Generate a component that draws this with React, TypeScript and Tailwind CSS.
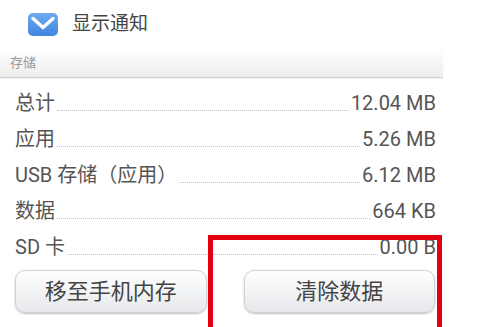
import React from 'react';

const rows = [
  { label: '总计', value: '12.04 MB' },
  { label: '应用', value: '5.26 MB' },
  { label: 'USB 存储（应用）', value: '6.12 MB' },
  { label: '数据', value: '664 KB' },
  { label: 'SD 卡', value: '0.00 B' },
];

const font = { fontFamily: 'Roboto, "Noto Sans CJK SC", sans-serif' };

function CheckIcon() {
  return (
    <svg width="30" height="23" viewBox="0 0 30 23">
      <defs>
        <linearGradient id="cb" x1="0" y1="0" x2="0" y2="1">
          <stop offset="0" stopColor="#6eaaf0" />
          <stop offset="1" stopColor="#3f86e0" />
        </linearGradient>
      </defs>
      <rect x="0" y="0" width="30" height="23" rx="5" fill="url(#cb)" />
      <path d="M5 5.5 L15 14.5 L25 5.5" fill="none" stroke="#fff" strokeWidth="3.4" strokeLinecap="round" strokeLinejoin="round" />
    </svg>
  );
}

function Row({ label, value }: { label: string; value: string }) {
  return (
    <div className="flex h-[36px] items-end pb-[6px] pl-[15px] pr-[7px] text-[20px] leading-none text-[#555]">
      <span className="whitespace-pre">{label}</span>
      <span className="mx-[2px] mb-[2px] flex-1 border-b border-dotted border-[#c4c4c4]" />
      <span>{value}</span>
    </div>
  );
}

export default function App() {
  return (
    <div className="relative h-[327px] w-[500px] overflow-hidden bg-white" style={font}>
      <div className="w-[443px]">
        <div className="flex h-[48px] items-center gap-[14px] pl-[28px] pt-[1px]">
          <CheckIcon />
          <span className="text-[19px] text-[#444]">显示通知</span>
        </div>
        <div className="flex h-[30px] items-center border-b border-[#d4d4d4] bg-gradient-to-b from-white to-[#ededed] pl-[10px] text-[13px] text-[#9a9a9a] shadow-[0_1px_1px_rgba(0,0,0,0.06)]">
          存储
        </div>
        <div className="pt-[5px]">
          {rows.map((r) => (
            <Row key={r.label} label={r.label} value={r.value} />
          ))}
        </div>
        <div className="mt-[7px] flex gap-[37px] pl-[15px] pr-[8px]">
          {['移至手机内存', '清除数据'].map((t) => (
            <button
              key={t}
              className="flex h-[43px] w-[192px] items-center justify-center rounded-[10px] border border-[#cfd2d6] bg-gradient-to-b from-white to-[#e6e8eb] text-[22px] text-[#444] shadow-[0_1px_2px_rgba(0,0,0,0.25)]"
            >
              {t}
            </button>
          ))}
        </div>
      </div>
      <div className="absolute left-[208px] top-[235px] h-[100px] w-[234px] border-[5px] border-[#e3000f]" />
    </div>
  );
}
